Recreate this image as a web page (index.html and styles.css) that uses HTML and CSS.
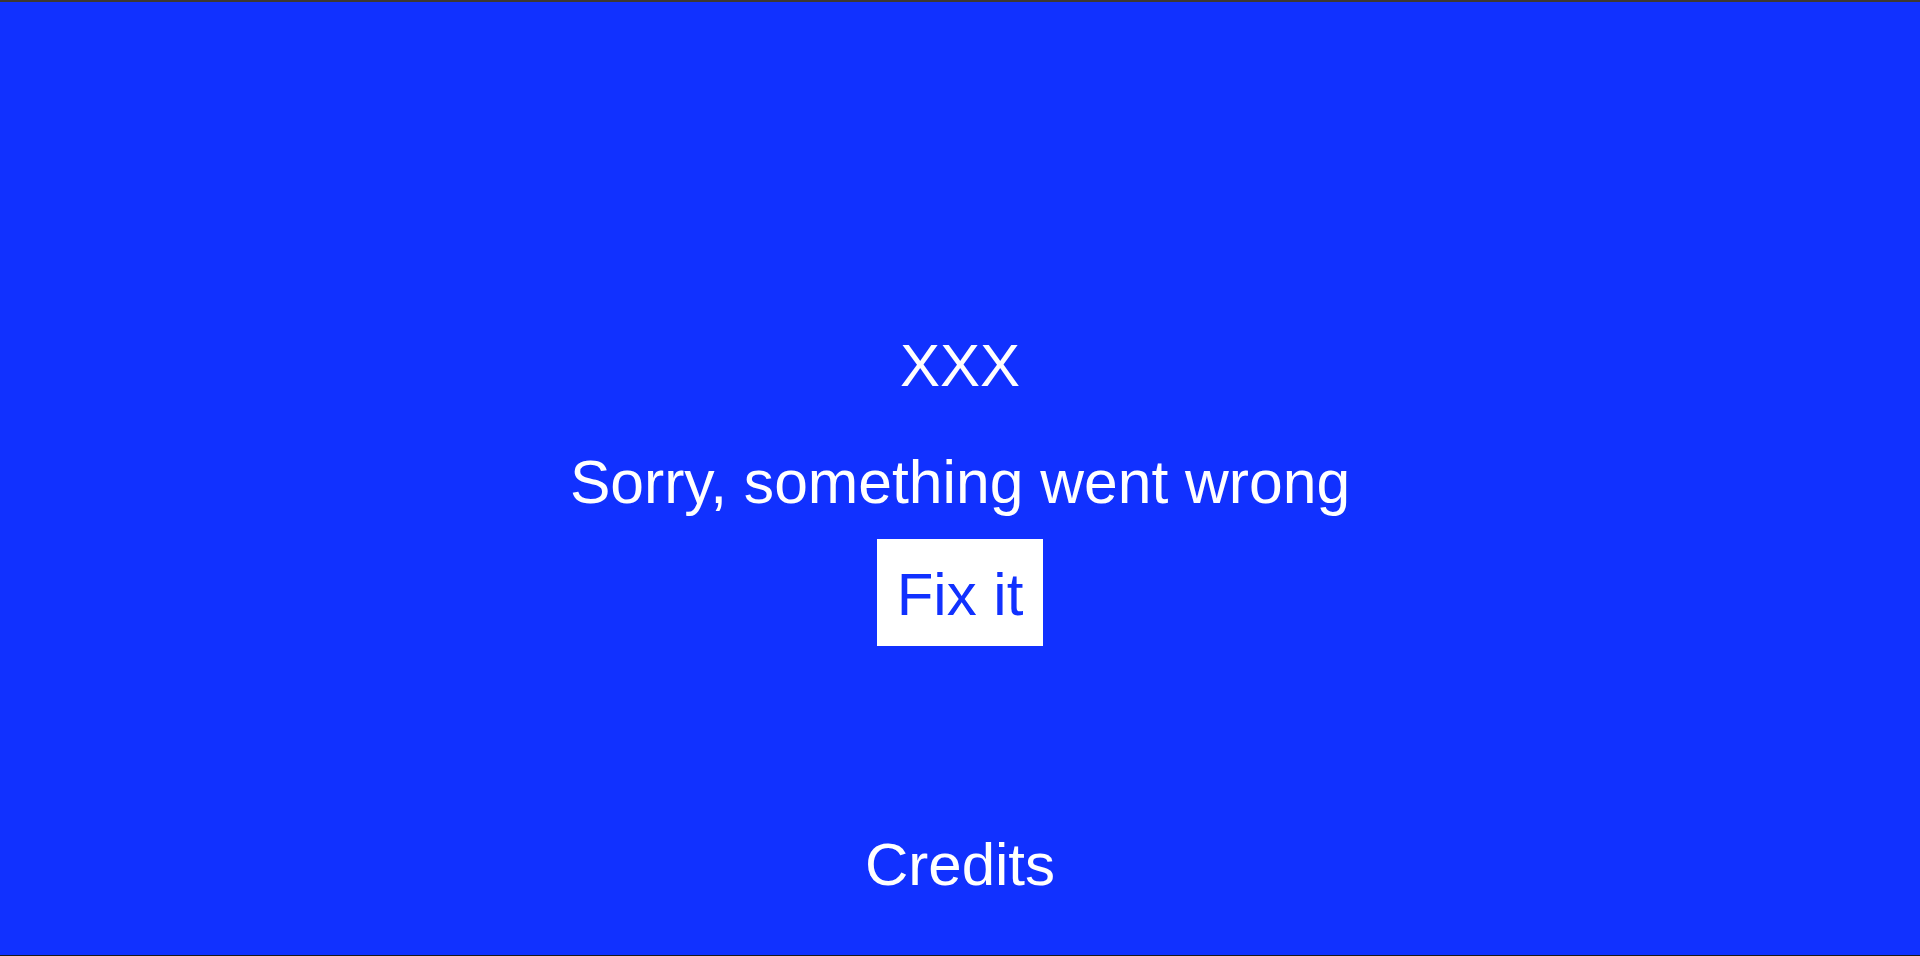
FILE: index.html
```html
<!DOCTYPE html>
<html lang="en">
<head>
<meta charset="utf-8">
<title>Sorry, something went wrong</title>
<link rel="stylesheet" href="styles.css">
</head>
<body>
<div class="screen">
  <main class="center">
    <h1 class="title">XXX</h1>
    <p class="message">Sorry, something went wrong</p>
    <button class="fix" type="button">Fix it</button>
  </main>
  <footer class="credits">Credits</footer>
</div>
</body>
</html>
```

FILE: styles.css
```css
html, body {
  margin: 0;
  padding: 0;
  background: #1131ff;
}

.screen {
  box-sizing: border-box;
  height: 956px;
  display: flex;
  flex-direction: column;
  align-items: center;
  background: #1131ff;
  border-top: 2px solid #3d3833;
  border-bottom: 1px solid #1a1a1a;
  padding-top: 329px;
  padding-bottom: 55px;
  color: #ffffff;
  font-family: "Liberation Sans", Arial, sans-serif;
  font-size: 60px;
  line-height: 70px;
}

.center {
  display: flex;
  flex-direction: column;
  align-items: center;
}

.title {
  margin: 0;
  font-size: 60px;
  font-weight: normal;
  line-height: 70px;
}

.message {
  margin: 46px 0 0;
  font-size: 60.6px;
  line-height: 70px;
}

.fix {
  margin-top: 22px;
  padding: 21px 20px 16px;
  border: none;
  border-radius: 0;
  background: #ffffff;
  color: #1131ff;
  font-family: "Liberation Sans", Arial, sans-serif;
  font-size: 60px;
  line-height: 70px;
  cursor: pointer;
}

.credits {
  margin-top: auto;
  line-height: 70px;
}
```
